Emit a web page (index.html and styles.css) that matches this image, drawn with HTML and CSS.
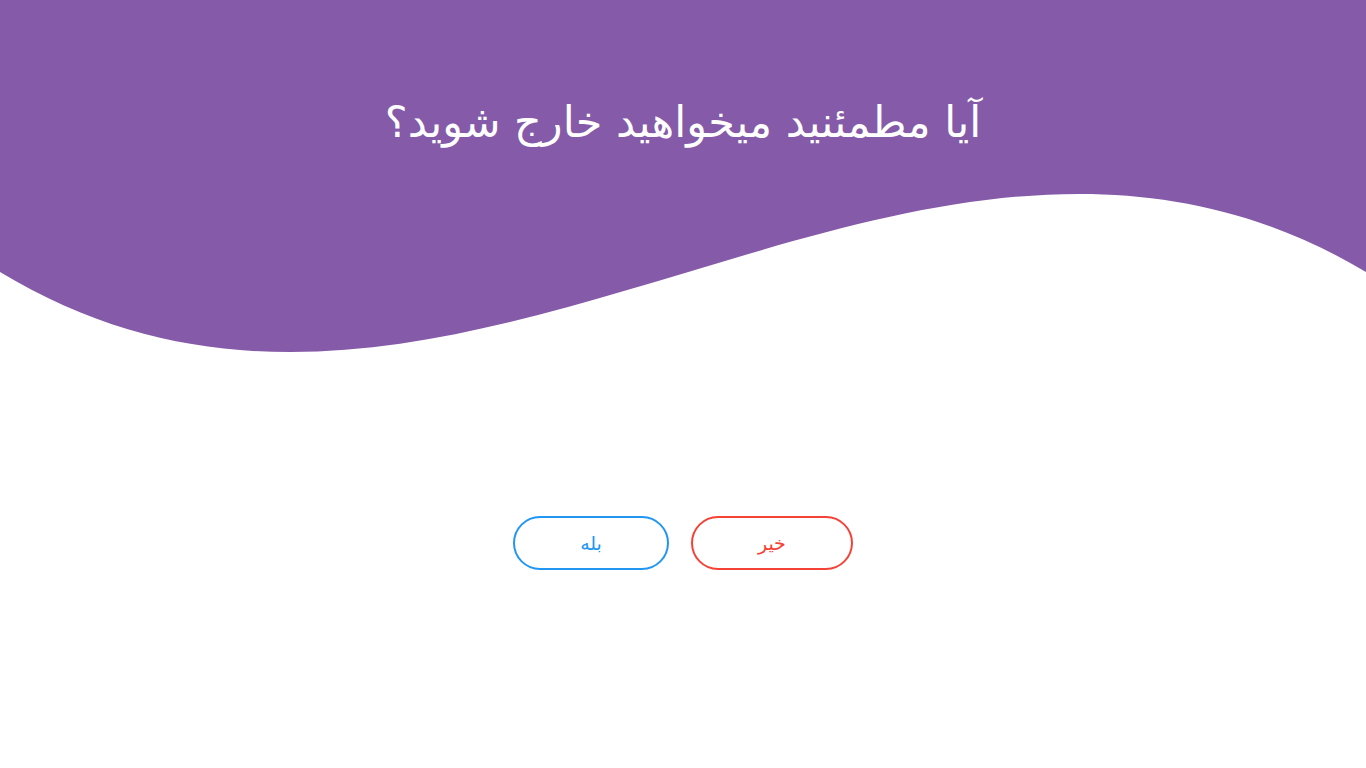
FILE: index.html
```html
<!DOCTYPE html>
<html lang="fa" dir="rtl">
<head>
<meta charset="utf-8">
<title>خروج</title>
<link rel="stylesheet" href="styles.css">
</head>
<body>
<main class="page">
  <header class="hero">
    <svg class="hero-wave" viewBox="0 0 1366 360" preserveAspectRatio="none" aria-hidden="true">
      <path d="M0,0 L0,272 C455,548 911,0 1366,272 L1366,0 Z" fill="#855AA8"/>
    </svg>
    <h1 class="hero-title">آیا مطمئنید میخواهید خارج شوید؟</h1>
  </header>
  <section class="actions">
    <button class="btn btn-no" type="button">خیر</button>
    <button class="btn btn-yes" type="button">بله</button>
  </section>
</main>
</body>
</html>
```
FILE: styles.css
```css
html, body {
  margin: 0;
  padding: 0;
  background: #ffffff;
}
body {
  font-family: "DejaVu Sans", "Noto Sans", sans-serif;
}
.page {
  display: flex;
  flex-direction: column;
  min-height: 768px;
}
.hero {
  position: relative;
  height: 360px;
  display: flex;
  justify-content: center;
}
.hero-wave {
  position: absolute;
  top: 0;
  left: 0;
  width: 100%;
  height: 100%;
  display: block;
}
.hero-title {
  position: relative;
  margin: 92px 0 0;
  font-size: 43px;
  font-weight: normal;
  color: #ffffff;
  line-height: 1.4;
  align-self: flex-start;
}
.actions {
  display: flex;
  justify-content: center;
  gap: 22px;
  margin-top: 156px;
}
.btn {
  height: 54px;
  padding: 0 65px;
  border-radius: 27px;
  background: #ffffff;
  border: 2px solid;
  font-family: inherit;
  font-size: 19px;
  cursor: pointer;
}
.btn-no {
  border-color: #F44336;
  color: #F44336;
}
.btn-yes {
  border-color: #2196F3;
  color: #2196F3;
}
```
